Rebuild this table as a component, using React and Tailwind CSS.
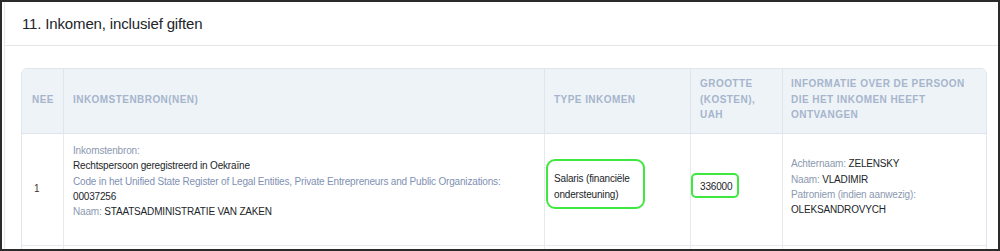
export default function App() {
  const label = "text-[#8b99b0]";
  return (
    <div className="w-[1000px] h-[251px] overflow-hidden border-2 border-[#2b2b2b] bg-white font-['Liberation_Sans',Arial,sans-serif] text-[#212529]">
      <div className="ml-[2px] h-full border-l border-[#e6e6e6]">
        <div className="h-[44px] flex items-center pl-[17px] border-b border-[#e6e6e6] text-[15px] tracking-[-0.15px] leading-none">
          11. Inkomen, inclusief giften
        </div>
        <div className="pl-[16px] pt-[22px]">
          <div className="w-[966px] border border-[#dfe5ec] rounded-t-[6px] overflow-hidden">
            <div className="grid grid-cols-[42px_481px_146px_92px_203px] bg-[#eef3f8] h-[65px] border-b border-[#dfe5ec] text-[10px] font-bold uppercase tracking-[0.45px] text-[#a6b5cc] leading-[15.5px]">
              <div className="flex items-center px-[10px] pb-[3px] border-r border-[#dfe5ec]">Nee</div>
              <div className="flex items-center px-[9px] pb-[3px] border-r border-[#dfe5ec]">Inkomstenbron(nen)</div>
              <div className="flex items-center px-[9px] pb-[3px] border-r border-[#dfe5ec]">Type inkomen</div>
              <div className="flex items-center px-[9px] pb-[3px] border-r border-[#dfe5ec]">Grootte (kosten), UAH</div>
              <div className="flex items-center px-[8px] pb-[3px]">Informatie over de persoon die het inkomen heeft ontvangen</div>
            </div>
            <div className="grid grid-cols-[42px_481px_146px_92px_203px] h-[112px] border-b border-[#e6e9ee] text-[10px] tracking-[-0.17px] leading-[15.3px]">
              <div className="flex items-center px-[12px] pb-[1px] border-r border-[#e6e9ee] text-[#4a3028]">1</div>
              <div className="px-[9px] pt-[9px] border-r border-[#e6e9ee]">
                <div className={label}>Inkomstenbron:</div>
                <div>Rechtspersoon geregistreerd in Oekraïne</div>
                <div className="text-[#7f91b3]">Code in het Unified State Register of Legal Entities, Private Entrepreneurs and Public Organizations:</div>
                <div>00037256</div>
                <div><span className={label}>Naam: </span>STAATSADMINISTRATIE VAN ZAKEN</div>
              </div>
              <div className="relative flex items-center px-[9px] pb-[6px] border-r border-[#e6e9ee] leading-[16px]">
                <div>Salaris (financiële<br />ondersteuning)</div>
                <div className="absolute left-[1px] top-[25px] w-[99px] h-[50px] border-2 border-[#3fe83f] rounded-[9px]"></div>
              </div>
              <div className="relative flex items-center px-[9px] pb-[6px] border-r border-[#e6e9ee]">
                <div>336000</div>
                <div className="absolute left-0 top-[39px] w-[48px] h-[25px] border-2 border-[#3fe83f] rounded-[5px]"></div>
              </div>
              <div className="flex items-center px-[8px] pb-[5px]">
                <div>
                  <div><span className={label}>Achternaam: </span>ZELENSKY</div>
                  <div><span className={label}>Naam: </span>VLADIMIR</div>
                  <div className={label}>Patroniem (indien aanwezig):</div>
                  <div>OLEKSANDROVYCH</div>
                </div>
              </div>
            </div>
            <div className="grid grid-cols-[42px_481px_146px_92px_203px] h-[20px]">
              <div className="border-r border-[#e6e9ee]"></div>
              <div className="border-r border-[#e6e9ee]"></div>
              <div className="border-r border-[#e6e9ee]"></div>
              <div className="border-r border-[#e6e9ee]"></div>
              <div></div>
            </div>
          </div>
        </div>
      </div>
    </div>
  );
}
